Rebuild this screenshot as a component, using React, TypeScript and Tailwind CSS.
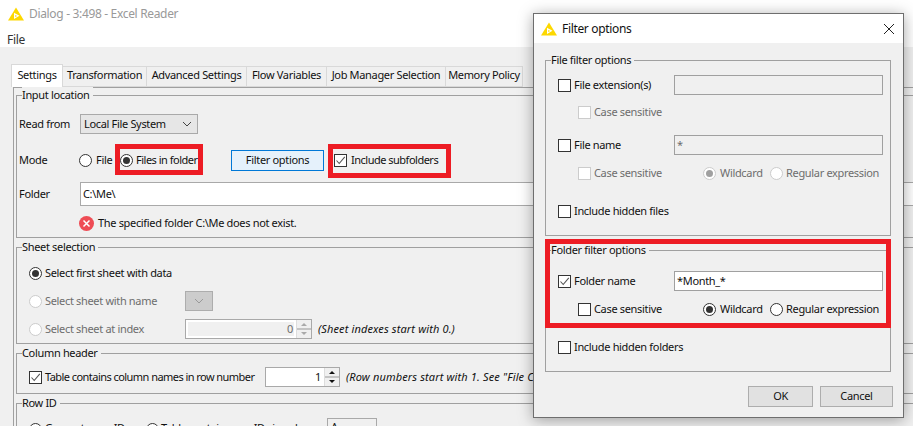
import React from 'react';

const Logo = ({ className }: { className: string }) => (
  <svg viewBox="0 0 16 14" className={className}>
    <path d="M8 0.5 L16 13.5 L0 13.5 Z" fill="#fdd800" />
    <path d="M6 5.8 L11.5 8.8 L6 12 Z" fill="#fff" />
    <path d="M7.2 8 L9.2 8.9 L7.2 10 Z" fill="#fdd800" />
  </svg>
);

const Check = ({ checked, disabled }: { checked?: boolean; disabled?: boolean }) => (
  <span className={`flex h-[13px] w-[13px] shrink-0 items-center justify-center border bg-white ${disabled ? 'border-[#cccccc]' : 'border-[#333333]'}`}>
    {checked && (
      <svg viewBox="0 0 11 11" className="h-[11px] w-[11px]">
        <path d="M1.5 5.5 L4.2 8.5 L9.8 1.8" fill="none" stroke="#555" strokeWidth="1.1" />
      </svg>
    )}
  </span>
);

const Radio = ({ checked, disabled }: { checked?: boolean; disabled?: boolean }) => (
  <span className={`flex h-[13px] w-[13px] shrink-0 items-center justify-center rounded-full border bg-white ${disabled ? 'border-[#cccccc]' : 'border-[#333333]'}`}>
    {checked && <span className={`h-[7px] w-[7px] rounded-full ${disabled ? 'bg-[#a0a0a0]' : 'bg-[#333333]'}`} />}
  </span>
);

const Label = ({ children, disabled, className = '' }: { children: React.ReactNode; disabled?: boolean; className?: string }) => (
  <span className={`whitespace-nowrap ${disabled ? 'text-[#6d6d6d]' : 'text-[#111111]'} ${className}`}>{children}</span>
);

const Group = ({ title, className, children }: { title: string; className: string; children?: React.ReactNode }) => (
  <div className={`border border-[#a0a0a0] ${className}`}>
    <div className="ml-[5px] -mt-[9px] h-4 w-fit bg-[#f0f0f0] pr-[3px] leading-4 text-[#111111]">{title}</div>
    {children}
  </div>
);

const Spinner = ({ value, disabled, className }: { value: string; disabled?: boolean; className: string }) => {
  const c = disabled ? 'border-[#aaaaaa]' : 'border-[#111111]';
  return (
    <div className={`flex h-5 border border-[#a9a9a9] bg-white ${className}`}>
      <div className={`m-[2px] flex flex-1 items-center justify-end pr-[1px] ${disabled ? 'bg-[#f0f0f0] text-[#6d6d6d]' : 'bg-white text-[#111111]'}`}>{value}</div>
      <div className="flex w-[15px] flex-col justify-center border-l border-[#dddddd] bg-[#f0f0f0]">
        <div className="flex h-2 items-center justify-center border-b border-[#c4c4c4]">
          <span className={`h-0 w-0 border-x-[3px] border-b-[3px] border-x-transparent ${c}`} />
        </div>
        <div className="flex h-2 items-center justify-center border-t border-[#c4c4c4]">
          <span className={`h-0 w-0 border-x-[3px] border-t-[3px] border-x-transparent ${c}`} />
        </div>
      </div>
    </div>
  );
};

const Chevron = ({ stroke }: { stroke: string }) => (
  <svg viewBox="0 0 10 6" className="h-[6px] w-[10px]">
    <path d="M1 1 L5 5 L9 1" fill="none" stroke={stroke} strokeWidth="1" />
  </svg>
);

const tabs = [
  ['Transformation', 'w-[84px]'],
  ['Advanced Settings', 'w-[100px]'],
  ['Flow Variables', 'w-[80px]'],
  ['Job Manager Selection', 'w-[119px]'],
  ['Memory Policy', 'w-[77px]'],
];

const WildcardRow = ({ disabled }: { disabled?: boolean }) => (
  <div className="ml-[32px] mt-[10px] flex h-4 items-center">
    <div className="flex w-[125px] items-center gap-[3px]">
      <Check disabled={disabled} />
      <Label disabled={disabled}>Case sensitive</Label>
    </div>
    <div className="flex w-[67px] items-center gap-[4px]">
      <Radio checked disabled={disabled} />
      <Label disabled={disabled}>Wildcard</Label>
    </div>
    <div className="flex items-center gap-[3px]">
      <Radio disabled={disabled} />
      <Label disabled={disabled}>Regular expression</Label>
    </div>
  </div>
);

const NameRow = ({ label, value, checked, className }: { label: string; value: string; checked?: boolean; className: string }) => (
  <div className={`ml-[12px] flex h-5 items-center ${className}`}>
    <div className="flex w-[116px] items-center gap-[3px]">
      <Check checked={checked} />
      <Label>{label}</Label>
    </div>
    <div className={`flex h-5 w-[209px] items-center border border-[#a0a0a0] pl-[2px] ${checked ? 'bg-white text-[#111111]' : 'bg-[#f0f0f0] text-[#6d6d6d]'}`}>{value}</div>
  </div>
);

const FilterDialog = () => (
  <div className="absolute left-[533px] top-[13px] h-[405px] w-[371px] border border-[#6e6e6e] bg-[#f0f0f0] shadow-[0_2px_14px_rgba(0,0,0,0.35)]">
    <div className="flex h-[29px] items-center bg-white pl-[7px]">
      <Logo className="h-[14px] w-[16px]" />
      <span className="ml-[5px] text-[12px] text-[#111111]">Filter options</span>
      <svg viewBox="0 0 10 10" className="ml-auto mr-[9px] h-[10px] w-[10px]">
        <path d="M0 0 L10 10 M10 0 L0 10" stroke="#222" strokeWidth="1" />
      </svg>
    </div>
    <Group title="File filter options" className="ml-[11px] mt-[17px] h-[176px] w-[346px]">
      <NameRow label="File extension(s)" value="" className="mt-[7px]" />
      <div className="ml-[32px] mt-[9px] flex h-4 items-center gap-[3px]">
        <Check disabled />
        <Label disabled>Case sensitive</Label>
      </div>
      <NameRow label="File name" value="*" className="mt-[15px]" />
      <WildcardRow disabled />
      <div className="ml-[12px] mt-[22px] flex h-4 items-center gap-[3px]">
        <Check />
        <Label>Include hidden files</Label>
      </div>
    </Group>
    <Group title="Folder filter options" className="ml-[11px] mt-[14px] h-[122px] w-[346px]">
      <NameRow label="Folder name" value="*Month_*" checked className="mt-[13px]" />
      <WildcardRow />
      <div className="ml-[12px] mt-[22px] flex h-4 items-center gap-[3px]">
        <Check />
        <Label>Include hidden folders</Label>
      </div>
    </Group>
    <div className="mr-[10px] mt-[14px] flex justify-end gap-[7px]">
      <button className="h-[21px] w-[65px] border border-[#adadad] bg-[#e1e1e1] text-[#111111]">OK</button>
      <button className="h-[21px] w-[73px] border border-[#adadad] bg-[#e1e1e1] text-[#111111]">Cancel</button>
    </div>
    <div className="pointer-events-none absolute left-[11px] top-[225px] h-[89px] w-[346px] border-[5px] border-[#ed1c24]" />
  </div>
);

export default function App() {
  return (
    <div className="relative h-[426px] w-[913px] overflow-hidden bg-[#f0f0f0] font-['Noto_Sans',sans-serif] text-[11px] tracking-[-0.33px]">
      <div className="h-[47px] bg-white">
        <div className="flex h-[28px] items-center pl-[8px]">
          <Logo className="h-[14px] w-[16px]" />
          <span className="ml-[5px] text-[12px] text-[#999999]">Dialog - 3:498 - Excel Reader</span>
        </div>
        <div className="pl-[7px] pt-[3px] text-[12px] text-[#333333]">File</div>
      </div>

      <div className="ml-[11px] mt-[16px] flex h-6 items-end">
        <div className="z-10 flex h-[23px] w-[52px] items-center justify-center whitespace-nowrap border border-b-0 border-[#d9d9d9] bg-white pb-[2px] text-[#111111]">Settings</div>
        {tabs.map(([name, width]) => (
          <div key={name} className={`flex h-[21px] items-center justify-center whitespace-nowrap border border-l-0 border-[#d9d9d9] pb-[2px] text-[#111111] ${width}`}>{name}</div>
        ))}
      </div>

      <div className="-mr-[20px] ml-[13px] h-[400px] border-l border-t border-[#a0a0a0] pl-[2px] pt-[7px]">
        <Group title="Input location" className="h-[143px] border-r-0">
          <div className="ml-[2px] mt-[11px] flex h-5 items-center">
            <span className="w-[61px] text-[#111111]">Read from</span>
            <div className="flex h-5 w-[118px] items-center justify-between border border-[#a9a9a9] bg-[#e6e6e6] pl-[3px] pr-[5px] text-[#111111]">
              Local File System
              <Chevron stroke="#444" />
            </div>
          </div>
          <div className="ml-[2px] mt-[16px] flex h-[21px] items-center">
            <span className="w-[60px] text-[#111111]">Mode</span>
            <div className="flex w-[41px] items-center gap-[4px]">
              <Radio />
              <Label>File</Label>
            </div>
            <div className="flex w-[111px] items-center gap-[3px]">
              <Radio checked />
              <Label className="tracking-[-0.5px]">Files in folder</Label>
            </div>
            <button className="h-[21px] w-[93px] border border-[#0078d7] bg-[#e5f1fb] text-[#111111]">Filter options</button>
            <div className="ml-[10px] flex items-center gap-[4px]">
              <Check checked />
              <Label className="tracking-[-0.5px]">Include subfolders</Label>
            </div>
          </div>
          <div className="ml-[2px] mt-[11px] flex h-6 items-center">
            <span className="w-[61px] text-[#111111]">Folder</span>
            <div className="flex h-6 flex-1 items-center border border-[#a9a9a9] bg-white pl-[2px] text-[#111111]">C:\Me\</div>
          </div>
          <div className="ml-[62px] mt-[9px] flex h-4 items-center gap-[4px]">
            <svg viewBox="0 0 15 15" className="h-[15px] w-[15px]">
              <circle cx="7.5" cy="7.5" r="7.5" fill="#ee4c55" />
              <path d="M4.5 4.5 L10.5 10.5 M10.5 4.5 L4.5 10.5" stroke="#fff" strokeWidth="1.5" />
            </svg>
            <Label>The specified folder C:\Me does not exist.</Label>
          </div>
        </Group>

        <Group title="Sheet selection" className="mt-[9px] h-[97px] border-r-0">
          <div className="ml-[12px] mt-[10px] flex h-4 items-center gap-[3px]">
            <Radio checked />
            <Label>Select first sheet with data</Label>
          </div>
          <div className="ml-[12px] mt-[10px] flex h-5 items-center">
            <div className="flex w-[156px] items-center gap-[3px]">
              <Radio disabled />
              <Label disabled>Select sheet with name</Label>
            </div>
            <div className="flex h-5 w-[28px] items-center justify-center border border-[#adadad] bg-[#cccccc]">
              <Chevron stroke="#999" />
            </div>
          </div>
          <div className="ml-[12px] mt-[8px] flex h-5 items-center">
            <div className="flex w-[156px] items-center gap-[3px]">
              <Radio disabled />
              <Label disabled>Select sheet at index</Label>
            </div>
            <Spinner value="0" disabled className="w-[127px]" />
            <span className="ml-[6px] whitespace-nowrap italic tracking-[0.13px] text-[#111111]">(Sheet indexes start with 0.)</span>
          </div>
        </Group>

        <Group title="Column header" className="mt-[9px] h-[41px] border-r-0">
          <div className="ml-[12px] mt-[6px] flex h-5 items-center">
            <div className="flex w-[236px] items-center gap-[3px]">
              <Check checked />
              <Label className="tracking-[-0.55px]">Table contains column names in row number</Label>
            </div>
            <Spinner value="1" className="w-[75px]" />
            <span className="ml-[6px] whitespace-nowrap italic tracking-[0.13px] text-[#111111]">(Row numbers start with 1. See "File Content" tab for available rows.)</span>
          </div>
        </Group>

        <Group title="Row ID" className="mt-[9px] h-[60px] border-r-0">
          <div className="ml-[12px] mt-[7px] flex h-5 items-start">
            <div className="flex w-[117px] items-start gap-[3px] pt-[5px]">
              <Radio />
              <Label className="-mt-[3px]">Generate row IDs</Label>
            </div>
            <div className="flex w-[181px] items-start gap-[2px] pt-[5px]">
              <Radio />
              <Label className="-mt-[3px]">Table contains row IDs in column</Label>
            </div>
            <div className="h-5 w-[50px] border border-[#a9a9a9] pl-[3px] text-[#111111]">A</div>
          </div>
        </Group>
      </div>

      <div className="pointer-events-none absolute left-[115px] top-[144px] h-[31px] w-[88px] border-[5px] border-[#ed1c24]" />
      <div className="pointer-events-none absolute left-[328px] top-[144px] h-[34px] w-[123px] border-[5px] border-[#ed1c24]" />

      <FilterDialog />
    </div>
  );
}
